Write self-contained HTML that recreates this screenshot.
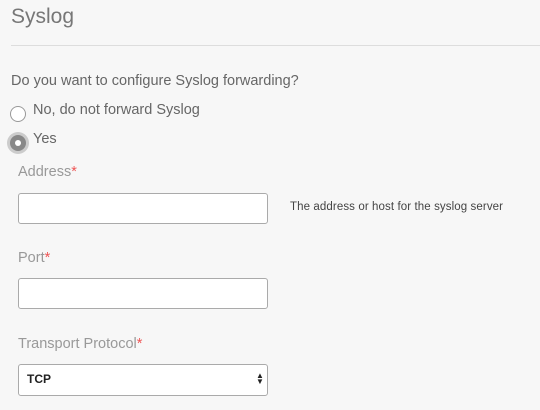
<!DOCTYPE html>
<html><head><style>
body{margin:0;width:540px;height:410px;background:#f7f7f7;font-family:"Liberation Sans",sans-serif;position:relative;overflow:hidden}
.a{position:absolute;white-space:nowrap}
.t{left:11px;top:5px;font-size:21px;color:#777}
.hr{left:11px;top:45px;width:529px;height:1px;background:#ddd}
.q{left:11px;top:73px;font-size:14.5px;color:#666}
.lab{font-size:14.5px;color:#666}
.r{width:14px;height:14px;border:1px solid #999;border-radius:50%;background:#fff}
.fl{left:18px;font-size:14.5px;color:#999}
.fl span{color:#e55}
.in{left:18px;width:248px;height:29px;border:1px solid #aaa;border-radius:3px;background:#fff}
</style></head><body>
<div class="a t">Syslog</div>
<div class="a hr"></div>
<div class="a q">Do you want to configure Syslog forwarding?</div>
<div class="a r" style="left:10px;top:106px"></div>
<div class="a lab" style="left:33px;top:102px">No, do not forward Syslog</div>
<div class="a" style="left:7px;top:132px;width:22px;height:22px;border-radius:50%;background:#ccc"></div>
<div class="a" style="left:10px;top:135px;width:16px;height:16px;border-radius:50%;background:#888"></div>
<div class="a" style="left:15px;top:140px;width:6px;height:6px;border-radius:50%;background:#fff"></div>
<div class="a lab" style="left:33px;top:131px">Yes</div>
<div class="a fl" style="top:164px">Address<span>*</span></div>
<div class="a in" style="top:193px"></div>
<div class="a" style="left:290px;top:201px;font-size:11.5px;color:#444;letter-spacing:0.1px">The address or host for the syslog server</div>
<div class="a fl" style="top:250px">Port<span>*</span></div>
<div class="a in" style="top:278px"></div>
<div class="a fl" style="top:336px">Transport Protocol<span>*</span></div>
<div class="a in" style="top:364px;height:30px"></div>
<div class="a" style="left:27px;top:372px;font-size:12px;color:#222;font-weight:bold">TCP</div>
<div class="a" style="left:256px;top:373px;font-size:8px;line-height:6px;color:#222">▲<br>▼</div>
</body></html>
